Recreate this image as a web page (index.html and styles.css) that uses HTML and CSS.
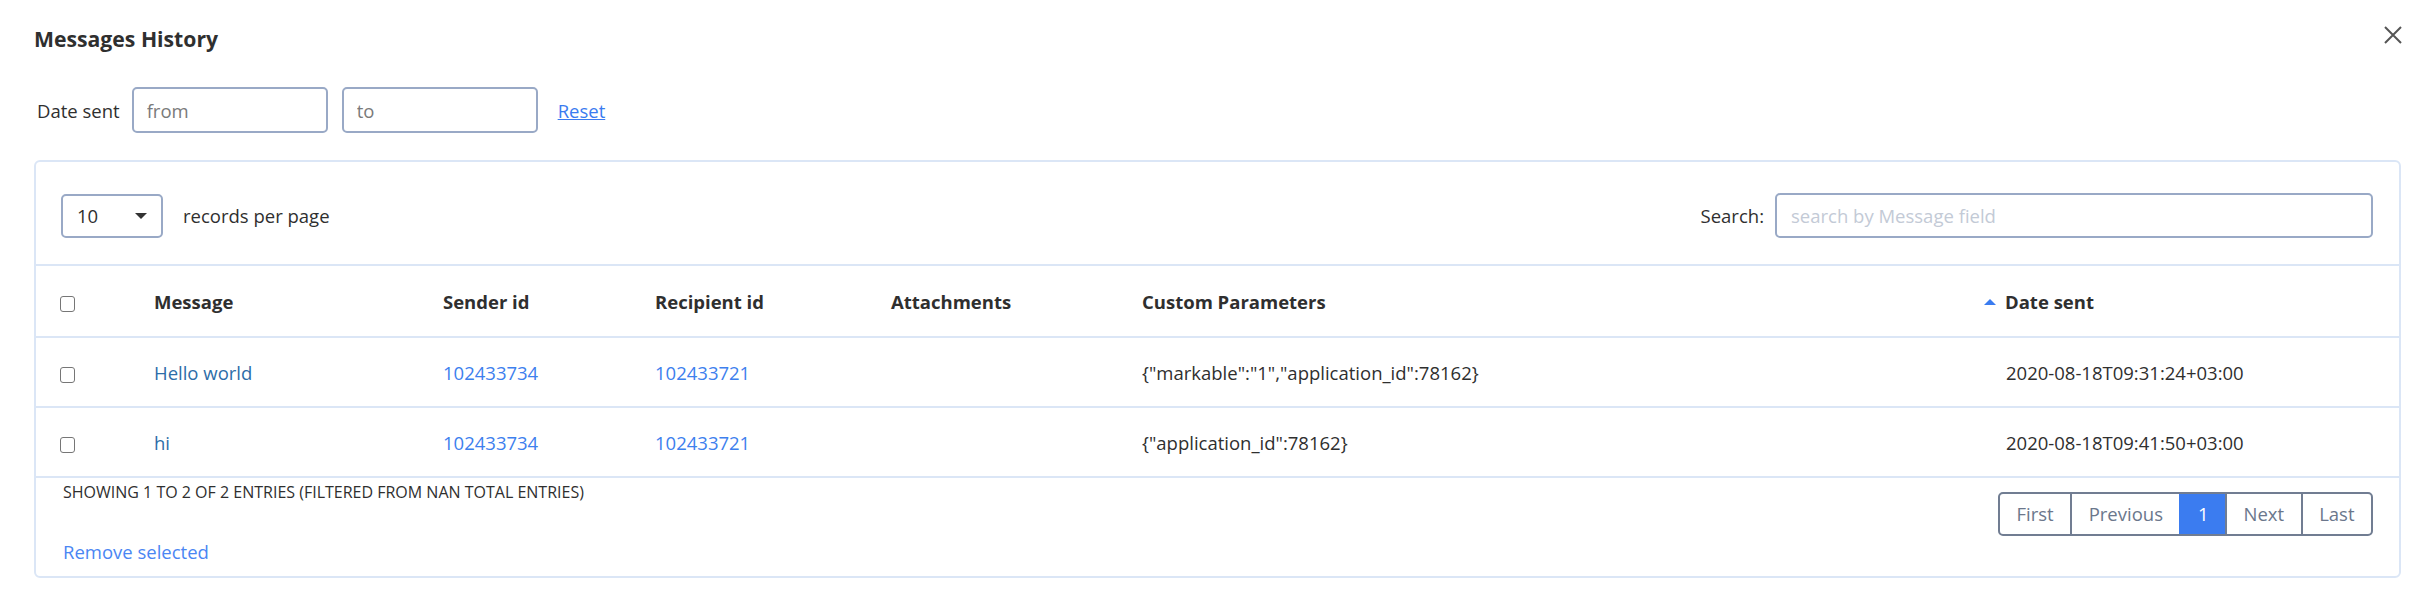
FILE: index.html
```html
<!DOCTYPE html>
<html lang="en">
<head>
    <meta charset="UTF-8">
    <meta name="viewport" content="width=device-width, initial-scale=1.0">
    <title>Messages History</title>
    <link rel="stylesheet" href="styles.css">
</head>
<body>
    <div class="modal">
        <div class="modal-header">
            <h2 class="modal-title">Messages History</h2>
            <div class="close-btn">
                <svg width="18" height="18" viewBox="0 0 18 18">
                    <path d="M1 1 L17 17 M17 1 L1 17" stroke="#555" stroke-width="2" fill="none"/>
                </svg>
            </div>
        </div>
        <div class="date-filter">
            <span class="date-label">Date sent</span>
            <input class="date-input" type="text" placeholder="from" />
            <input class="date-input" type="text" placeholder="to" />
            <a class="reset-link" href="#">Reset</a>
        </div>
        <div class="panel">
            <div class="panel-top">
                <div class="per-page">
                    <div class="select-box">
                        <span>10</span>
                        <span class="caret"></span>
                    </div>
                    <span class="per-page-label">records per page</span>
                </div>
                <div class="search">
                    <span class="search-label">Search:</span>
                    <input class="search-input" type="text" placeholder="search by Message field" />
                </div>
            </div>
            <table class="table">
                <colgroup>
                    <col style="width: 118px">
                    <col style="width: 289px">
                    <col style="width: 212px">
                    <col style="width: 236px">
                    <col style="width: 251px">
                    <col style="width: 864px">
                    <col style="width: 393px">
                </colgroup>
                <thead>
                    <tr>
                        <th class="check-cell"><span class="checkbox"></span></th>
                        <th>Message</th>
                        <th>Sender id</th>
                        <th>Recipient id</th>
                        <th>Attachments</th>
                        <th>Custom Parameters</th>
                        <th><span class="sort-arrow"></span>Date sent</th>
                    </tr>
                </thead>
                <tbody>
                    <tr>
                        <td class="check-cell"><span class="checkbox"></span></td>
                        <td><a class="msg-link" href="#">Hello world</a></td>
                        <td><a class="id-link" href="#">102433734</a></td>
                        <td><a class="id-link" href="#">102433721</a></td>
                        <td></td>
                        <td>{"markable":"1","application_id":78162}</td>
                        <td>2020-08-18T09:31:24+03:00</td>
                    </tr>
                    <tr>
                        <td class="check-cell"><span class="checkbox"></span></td>
                        <td><a class="msg-link" href="#">hi</a></td>
                        <td><a class="id-link" href="#">102433734</a></td>
                        <td><a class="id-link" href="#">102433721</a></td>
                        <td></td>
                        <td>{"application_id":78162}</td>
                        <td>2020-08-18T09:41:50+03:00</td>
                    </tr>
                </tbody>
            </table>
            <div class="panel-footer">
                <div class="footer-left">
                    <div class="entries-info">Showing 1 to 2 of 2 entries (filtered from NaN total entries)</div>
                    <a class="remove-link" href="#">Remove selected</a>
                </div>
                <div class="pager">
                    <div class="page-btn">First</div>
                    <div class="page-btn">Previous</div>
                    <div class="page-btn active">1</div>
                    <div class="page-btn">Next</div>
                    <div class="page-btn">Last</div>
                </div>
            </div>
        </div>
    </div>
</body>
</html>
```

FILE: styles.css
```css
body {
    margin: 0;
    background: #fff;
    font-family: "Open Sans", "Noto Sans", sans-serif;
    font-size: 18.5px;
    color: #2f2f2f;
}
.modal {
    padding: 25px 19px 0 34px;
}
.modal-header {
    display: flex;
    justify-content: space-between;
    align-items: flex-start;
}
.modal-title {
    margin: 0;
    font-size: 21.2px;
    line-height: 28px;
    font-weight: 700;
    color: #2f2f2f;
}
.close-btn {
    width: 18px;
    height: 18px;
    margin-top: -1px;
    margin-right: -1px;
    cursor: pointer;
}
.date-filter {
    display: flex;
    align-items: center;
    margin-top: 34px;
    height: 46px;
}
.date-label {
    margin-left: 3px;
    margin-right: 12px;
}
.date-input {
    box-sizing: border-box;
    width: 196px;
    height: 46px;
    margin-right: 14px;
    padding: 0 13px;
    border: 2px solid #99a9c6;
    border-radius: 5px;
    font-family: inherit;
    font-size: 18.5px;
    color: #333;
    outline: none;
}
.date-input::placeholder {
    color: #7a7a7a;
}
.reset-link {
    margin-left: 6px;
    color: #3a7bf0;
    text-decoration: underline;
}
.panel {
    margin-top: 27px;
    border: 2px solid #dbe6f6;
    border-radius: 6px;
    overflow: hidden;
}
.panel-top {
    display: flex;
    justify-content: space-between;
    align-items: center;
    padding: 31px 26px 26px 25px;
    border-bottom: 2px solid #dbe6f6;
}
.per-page {
    display: flex;
    align-items: center;
}
.select-box {
    box-sizing: border-box;
    display: flex;
    align-items: center;
    justify-content: space-between;
    width: 102px;
    height: 44px;
    padding: 0 14px 0 14px;
    border: 2px solid #99a9c6;
    border-radius: 5px;
}
.caret {
    width: 0;
    height: 0;
    border-left: 6.5px solid transparent;
    border-right: 6.5px solid transparent;
    border-top: 6px solid #333;
}
.per-page-label {
    margin-left: 20px;
}
.search {
    display: flex;
    align-items: center;
}
.search-label {
    margin-right: 11px;
}
.search-input {
    box-sizing: border-box;
    width: 598px;
    height: 45px;
    padding: 0 14px;
    border: 2px solid #99a9c6;
    border-radius: 5px;
    font-family: inherit;
    font-size: 18.5px;
    outline: none;
}
.search-input::placeholder {
    color: #c3cad6;
}
.table {
    width: 100%;
    table-layout: fixed;
    border-collapse: collapse;
}
.table th,
.table td {
    padding: 0;
    text-align: left;
    vertical-align: middle;
    border-bottom: 2px solid #dbe6f6;
    white-space: nowrap;
}
.table th {
    height: 70px;
    font-weight: 700;
}
.table td {
    height: 68px;
}
.table .check-cell {
    padding-left: 24px;
}
.checkbox {
    display: inline-block;
    box-sizing: border-box;
    width: 15px;
    height: 16px;
    border: 1.5px solid #767676;
    border-radius: 3px;
    vertical-align: middle;
}
.sort-arrow {
    display: inline-block;
    width: 0;
    height: 0;
    margin-left: -22px;
    margin-right: 9px;
    border-left: 6.5px solid transparent;
    border-right: 6.5px solid transparent;
    border-bottom: 6px solid #3b7cf0;
    vertical-align: 4px;
}
.msg-link {
    color: #2d6da8;
    text-decoration: none;
}
.id-link {
    color: #3d80ee;
    text-decoration: none;
}
.panel-footer {
    display: flex;
    justify-content: space-between;
    align-items: flex-start;
    padding: 4px 26px 11px 27px;
}
.footer-left {
    display: flex;
    flex-direction: column;
    align-items: flex-start;
}
.entries-info {
    font-size: 16px;
    line-height: 20px;
    text-transform: uppercase;
}
.remove-link {
    margin-top: 37px;
    line-height: 26px;
    color: #4a86f3;
    text-decoration: none;
}
.pager {
    display: flex;
    margin-top: 10px;
    border: 2px solid #717d92;
    border-radius: 5px;
    overflow: hidden;
}
.page-btn {
    height: 40px;
    line-height: 40px;
    padding: 0 16.5px;
    font-size: 18.5px;
    color: #6b778c;
    border-left: 2px solid #717d92;
    cursor: pointer;
}
.page-btn:first-child {
    border-left: none;
}
.page-btn.active {
    background: #3b7cf0;
    border-left-color: #3b7cf0;
    color: #fff;
}
```
